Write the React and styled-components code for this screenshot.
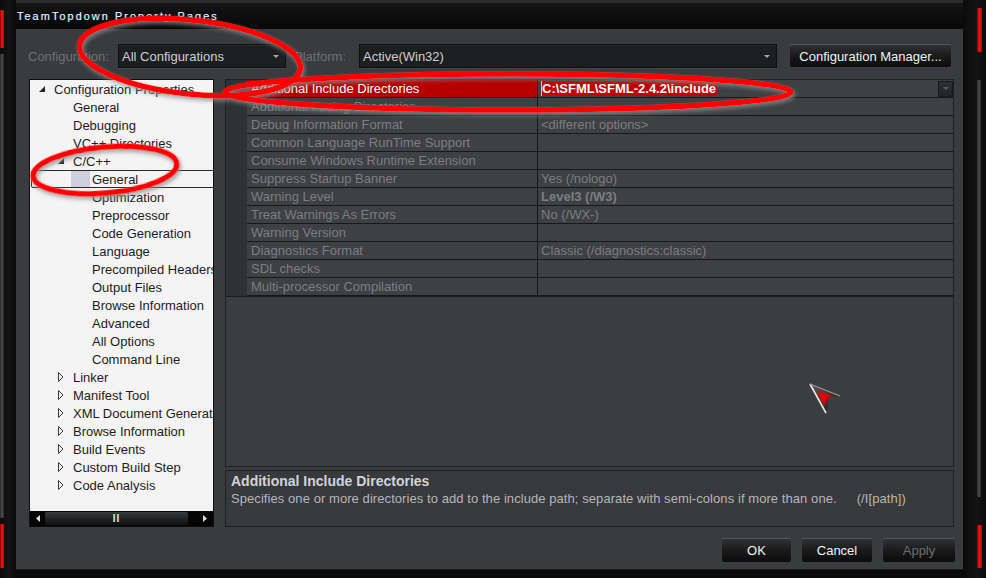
import React from "react";
import styled, { createGlobalStyle } from "styled-components";

const GlobalStyle = createGlobalStyle`
  html, body {
    margin: 0;
    padding: 0;
    background: #0b0b0b;
  }
  body {
    font-family: "Liberation Sans", Arial, sans-serif;
  }
`;

const Window = styled.div`
  position: relative;
  width: 986px;
  height: 578px;
  display: flex;
  background: #0b0b0c;
  overflow: hidden;
  font-family: "Liberation Sans", Arial, sans-serif;
  font-size: 13px;
`;

const Edge = styled.div`
  width: ${(p) => p.w}px;
  flex-shrink: 0;
  display: flex;
  flex-direction: column;
  box-sizing: border-box;
  padding: ${(p) => p.pad};
  background: linear-gradient(90deg, #0a0a0a, #141415 60%, #0a0a0a);
`;

const Accent = styled.div`
  width: ${(p) => p.w || 4}px;
  height: ${(p) => p.h}px;
  margin-top: ${(p) => p.mt || 0}px;
  background: linear-gradient(90deg, #7a0000, #ff1010 45%, #c00000);
  border-radius: 1px;
`;

const Rail = styled.div`
  width: ${(p) => p.w || 4}px;
  flex: 1;
  margin: ${(p) => p.m || "0"};
  background: linear-gradient(90deg, #2a2a2b, #4a4a4c, #2a2a2b);
`;

const Center = styled.div`
  width: 947px;
  display: flex;
  flex-direction: column;
`;

const TitleBar = styled.div`
  height: 29px;
  box-sizing: border-box;
  border-top: 3px solid #2c2c2d;
  background: linear-gradient(#151516, #070707);
  display: flex;
  align-items: center;
  padding-left: 1px;
  color: #eef3f8;
  font-size: 11px;
  letter-spacing: 2px;
  text-shadow: -0.5px 0 0 rgba(90, 170, 255, 0.6);
`;

const Client = styled.div`
  height: 540px;
  background: #393b3e;
  display: flex;
  flex-direction: column;
  padding-top: 15px;
  box-sizing: border-box;
`;

const BottomBar = styled.div`
  flex: 1;
  background: #0a0a0a;
  border-top: 1px solid #1b1b1c;
`;

/* configuration row */

const ConfigRow = styled.div`
  height: 24px;
  display: flex;
  align-items: center;
  padding: 0 11px 0 12px;
`;

const FieldLabel = styled.div`
  width: ${(p) => p.w}px;
  margin-left: ${(p) => p.ml || 0}px;
  color: #6f7174;
  white-space: nowrap;
`;

const Select = styled.div`
  box-sizing: border-box;
  height: 24px;
  width: ${(p) => (p.w ? `${p.w}px` : "auto")};
  flex: ${(p) => (p.w ? "none" : 1)};
  display: flex;
  align-items: center;
  padding: 0 6px 0 3px;
  background: #1d1e20;
  border: 1px solid #0e0e0f;
  box-shadow: inset 0 1px 0 #2a2b2d, 0 1px 0 #45474a;
  color: #cfcfcf;
`;

const DownArrow = styled.span`
  margin-left: auto;
  width: 0;
  height: 0;
  border-left: 3px solid transparent;
  border-right: 3px solid transparent;
  border-top: 3px solid #a9a9a9;
`;

const ActionButton = styled.div`
  box-sizing: border-box;
  width: ${(p) => p.w}px;
  height: ${(p) => p.h || 25}px;
  margin-left: ${(p) => p.ml || 0}px;
  display: flex;
  align-items: center;
  justify-content: center;
  border: 1px solid #3c3d3f;
  border-top-color: #555658;
  border-radius: 3px;
  background: linear-gradient(#303133, #1a1a1b 50%, #0b0b0b);
  color: ${(p) => (p.disabled ? "#6d6e70" : "#f2f2f2")};
  white-space: nowrap;
`;

/* main area */

const MainArea = styled.div`
  margin-top: 11px;
  height: 448px;
  display: flex;
  gap: 11px;
  padding: 0 9px 0 13px;
`;

const Tree = styled.div`
  width: 185px;
  flex-shrink: 0;
  box-sizing: border-box;
  border: 1px solid #0d0d0d;
  background: #f4f4f4;
  display: flex;
  flex-direction: column;
  overflow: hidden;
`;

const TreeBody = styled.div`
  flex: 1;
  overflow: hidden;
`;

const TreeRow = styled.div`
  position: relative;
  height: 18px;
  display: flex;
  align-items: center;
  padding-left: ${(p) => 9 + p.level * 19}px;
  color: #1c1c1c;
  white-space: nowrap;

  &::before {
    content: "";
    display: ${(p) => (p.selected ? "block" : "none")};
    position: absolute;
    left: 1px;
    right: -6px;
    top: 0;
    bottom: 0;
    border: 1px solid #2a2a2a;
    border-radius: 2px;
  }
`;

const Slot = styled.span`
  width: 15px;
  height: 18px;
  flex-shrink: 0;
  display: flex;
  align-items: center;
`;

const Swatch = styled.span`
  width: 19px;
  height: 17px;
  margin-left: -6px;
  background: #cfd0dc;
`;

const ScrollBar = styled.div`
  height: 15px;
  flex-shrink: 0;
  background: #050505;
  display: flex;
  align-items: center;
`;

const ScrollButton = styled.div`
  width: ${(p) => p.w}px;
  height: 15px;
  display: flex;
  align-items: center;
  justify-content: ${(p) => (p.end ? "flex-end" : "center")};
  padding-right: ${(p) => (p.end ? 6 : 0)}px;
  box-sizing: border-box;
`;

const ScrollThumb = styled.div`
  flex: 1;
  height: 13px;
  border-radius: 2px;
  background: linear-gradient(#3a3b3d, #1e1f20 55%, #121213);
  display: flex;
  align-items: center;
  justify-content: center;
  color: #e8e8e8;
  font-size: 10px;
  font-weight: bold;
  letter-spacing: 1px;
`;

const RightCol = styled.div`
  flex: 1;
  display: flex;
  flex-direction: column;
  gap: 3px;
`;

const GridPanel = styled.div`
  height: 388px;
  box-sizing: border-box;
  border: 1px solid #1e1f21;
  background: #3b3d40;
`;

const GridRows = styled.div`
  border-bottom: 1px solid #1a1b1d;
`;

const GridRow = styled.div`
  display: flex;
  height: 18px;
`;

const Gutter = styled.div`
  width: 21px;
  background: #2f3134;
`;

const NameCell = styled.div`
  width: 291px;
  box-sizing: border-box;
  padding-left: 4px;
  display: flex;
  align-items: center;
  border-right: 1px solid #17181a;
  border-bottom: 1px solid #17181a;
  background: ${(p) => (p.selected ? "#b60000" : "#3e4043")};
  color: ${(p) => (p.selected ? "#ffffff" : "#7c7e82")};
  white-space: nowrap;
  overflow: hidden;
`;

const ValueCell = styled.div`
  flex: 1;
  box-sizing: border-box;
  padding-left: 3px;
  display: flex;
  align-items: center;
  border-bottom: 1px solid #17181a;
  background: #3e4043;
  color: #7c7e82;
  font-weight: ${(p) => (p.bold ? "bold" : "normal")};
  white-space: nowrap;
`;

const Caret = styled.span`
  width: 1px;
  height: 15px;
  background: #7fe6ff;
`;

const EditText = styled.span`
  background: #c20000;
  color: #ffffff;
  font-weight: bold;
  line-height: 15px;
  padding-right: 1px;
`;

const CellDrop = styled.span`
  margin-left: auto;
  width: 15px;
  height: 16px;
  box-sizing: border-box;
  border: 1px solid #1a1a1b;
  background: linear-gradient(#2f3032, #222325);
  display: flex;
  align-items: center;
  justify-content: center;
`;

const CellDropArrow = styled.span`
  width: 0;
  height: 0;
  border-left: 3px solid transparent;
  border-right: 3px solid transparent;
  border-top: 3px solid #5b5c5f;
`;

const DescPanel = styled.div`
  flex: 1;
  box-sizing: border-box;
  border: 1px solid #1e1f21;
  background: #37393c;
  padding: 2px 5px;
  line-height: 17px;
`;

const DescTitle = styled.div`
  color: #d2d3d5;
  font-weight: bold;
  font-size: 14px;
`;

const DescText = styled.div`
  color: #b6b7b9;
  white-space: nowrap;
  letter-spacing: 0.07px;
`;

const DescSwitch = styled.span`
  margin-left: 20px;
`;

const ButtonRow = styled.div`
  margin-top: 11px;
  height: 25px;
  display: flex;
  justify-content: flex-end;
  gap: 9px;
  padding-right: 7px;
`;

const Annotations = styled.svg`
  position: absolute;
  left: 0;
  top: 0;
  pointer-events: none;
`;

const CursorMark = styled.svg`
  position: absolute;
  left: 806px;
  top: 380px;
  pointer-events: none;
`;

const OpenTriangle = () => (
  <svg width="6" height="6" viewBox="0 0 6 6">
    <polygon points="0,6 6,6 6,0" fill="#262626" />
  </svg>
);

const ClosedTriangle = () => (
  <svg width="6" height="10" viewBox="0 0 6 10">
    <polygon points="0.5,0.5 5,5 0.5,9.5" fill="none" stroke="#3a3a3a" strokeWidth="1" />
  </svg>
);

const treeItems = [
  { label: "Configuration Properties", level: 0, exp: "open" },
  { label: "General", level: 1 },
  { label: "Debugging", level: 1 },
  { label: "VC++ Directories", level: 1 },
  { label: "C/C++", level: 1, exp: "open" },
  { label: "General", level: 2, selected: true },
  { label: "Optimization", level: 2 },
  { label: "Preprocessor", level: 2 },
  { label: "Code Generation", level: 2 },
  { label: "Language", level: 2 },
  { label: "Precompiled Headers", level: 2 },
  { label: "Output Files", level: 2 },
  { label: "Browse Information", level: 2 },
  { label: "Advanced", level: 2 },
  { label: "All Options", level: 2 },
  { label: "Command Line", level: 2 },
  { label: "Linker", level: 1, exp: "closed" },
  { label: "Manifest Tool", level: 1, exp: "closed" },
  { label: "XML Document Generator", level: 1, exp: "closed" },
  { label: "Browse Information", level: 1, exp: "closed" },
  { label: "Build Events", level: 1, exp: "closed" },
  { label: "Custom Build Step", level: 1, exp: "closed" },
  { label: "Code Analysis", level: 1, exp: "closed" },
];

const properties = [
  ["Additional Include Directories", "C:\\SFML\\SFML-2.4.2\\include"],
  ["Additional #using Directories", ""],
  ["Debug Information Format", "<different options>"],
  ["Common Language RunTime Support", ""],
  ["Consume Windows Runtime Extension", ""],
  ["Suppress Startup Banner", "Yes (/nologo)"],
  ["Warning Level", "Level3 (/W3)", true],
  ["Treat Warnings As Errors", "No (/WX-)"],
  ["Warning Version", ""],
  ["Diagnostics Format", "Classic (/diagnostics:classic)"],
  ["SDL checks", ""],
  ["Multi-processor Compilation", ""],
];

export default function App() {
  return (
    <Window>
      <GlobalStyle />
      <Edge w={16} pad="10px 0 10px 0">
        <Accent h={38} />
        <Rail m="6px 0 6px 0" />
        <Accent h={44} />
      </Edge>

      <Center>
        <TitleBar>TeamTopdown Property Pages</TitleBar>
        <Client>
          <ConfigRow>
            <FieldLabel w={90}>Configuration:</FieldLabel>
            <Select w={168}>
              All Configurations
              <DownArrow />
            </Select>
            <FieldLabel w={65} ml={8}>
              Platform:
            </FieldLabel>
            <Select>
              Active(Win32)
              <DownArrow />
            </Select>
            <ActionButton w={163} h={24} ml={12}>
              Configuration Manager...
            </ActionButton>
          </ConfigRow>

          <MainArea>
            <Tree>
              <TreeBody>
                {treeItems.map((it, i) => (
                  <TreeRow key={i} level={it.level} selected={it.selected}>
                    <Slot>
                      {it.exp === "open" && <OpenTriangle />}
                      {it.exp === "closed" && <ClosedTriangle />}
                      {it.selected && <Swatch />}
                    </Slot>
                    {it.label}
                  </TreeRow>
                ))}
              </TreeBody>
              <ScrollBar>
                <ScrollButton w={15}>
                  <svg width="4" height="7" viewBox="0 0 4 7">
                    <polygon points="4,0 0,3.5 4,7" fill="#e0e0e0" />
                  </svg>
                </ScrollButton>
                <ScrollThumb>II</ScrollThumb>
                <ScrollButton w={25} end>
                  <svg width="4" height="7" viewBox="0 0 4 7">
                    <polygon points="0,0 4,3.5 0,7" fill="#e0e0e0" />
                  </svg>
                </ScrollButton>
              </ScrollBar>
            </Tree>

            <RightCol>
              <GridPanel>
                <GridRows>
                  {properties.map(([name, value, bold], i) => (
                    <GridRow key={i}>
                      <Gutter />
                      <NameCell selected={i === 0}>{name}</NameCell>
                      <ValueCell bold={bold}>
                        {i === 0 ? (
                          <>
                            <Caret />
                            <EditText>{value}</EditText>
                            <CellDrop>
                              <CellDropArrow />
                            </CellDrop>
                          </>
                        ) : (
                          value
                        )}
                      </ValueCell>
                    </GridRow>
                  ))}
                </GridRows>
              </GridPanel>
              <DescPanel>
                <DescTitle>Additional Include Directories</DescTitle>
                <DescText>
                  Specifies one or more directories to add to the include path; separate with
                  semi-colons if more than one.
                  <DescSwitch>(/I[path])</DescSwitch>
                </DescText>
              </DescPanel>
            </RightCol>
          </MainArea>

          <ButtonRow>
            <ActionButton w={71}>OK</ActionButton>
            <ActionButton w={72}>Cancel</ActionButton>
            <ActionButton w={74} disabled>
              Apply
            </ActionButton>
          </ButtonRow>
        </Client>
        <BottomBar />
      </Center>

      <Edge w={23} pad="8px 0 10px 14px">
        <Accent w={5} h={44} />
        <Rail w={4} m="28px 0 28px 0" />
        <Accent w={5} h={43} />
      </Edge>

      <Annotations width="986" height="578" viewBox="0 0 986 578">
        <defs>
          <filter id="shade" x="-10%" y="-40%" width="120%" height="180%">
            <feDropShadow dx="1.5" dy="2.5" stdDeviation="2" floodColor="#8c8c8c" floodOpacity="0.85" />
          </filter>
        </defs>
        <g fill="none" stroke="#ff0000" strokeWidth="5.5" filter="url(#shade)">
          <ellipse cx="190" cy="57" rx="111" ry="37" transform="rotate(6 190 57)" />
          <ellipse cx="508" cy="92" rx="283" ry="18" />
          <ellipse cx="105" cy="170" rx="72" ry="23" transform="rotate(-5 105 170)" />
        </g>
      </Annotations>

      <CursorMark width="38" height="38" viewBox="0 0 38 38">
        <defs>
          <linearGradient id="cbody" x1="0" y1="0" x2="1" y2="1">
            <stop offset="0" stopColor="#5a5a5c" />
            <stop offset="1" stopColor="#141414" />
          </linearGradient>
          <filter id="glow" x="-50%" y="-50%" width="200%" height="200%">
            <feGaussianBlur stdDeviation="1.2" />
          </filter>
        </defs>
        <polygon points="4,4 34,16 23,18 20,33" fill="url(#cbody)" />
        <polygon points="11,11 27,16.5 21,19 18,26" fill="#f00000" filter="url(#glow)" />
        <line x1="4" y1="4" x2="20" y2="33" stroke="#e8e8e8" strokeWidth="1.6" />
        <line x1="4" y1="4" x2="34" y2="16" stroke="#9a9a9a" strokeWidth="1.2" />
      </CursorMark>
    </Window>
  );
}
